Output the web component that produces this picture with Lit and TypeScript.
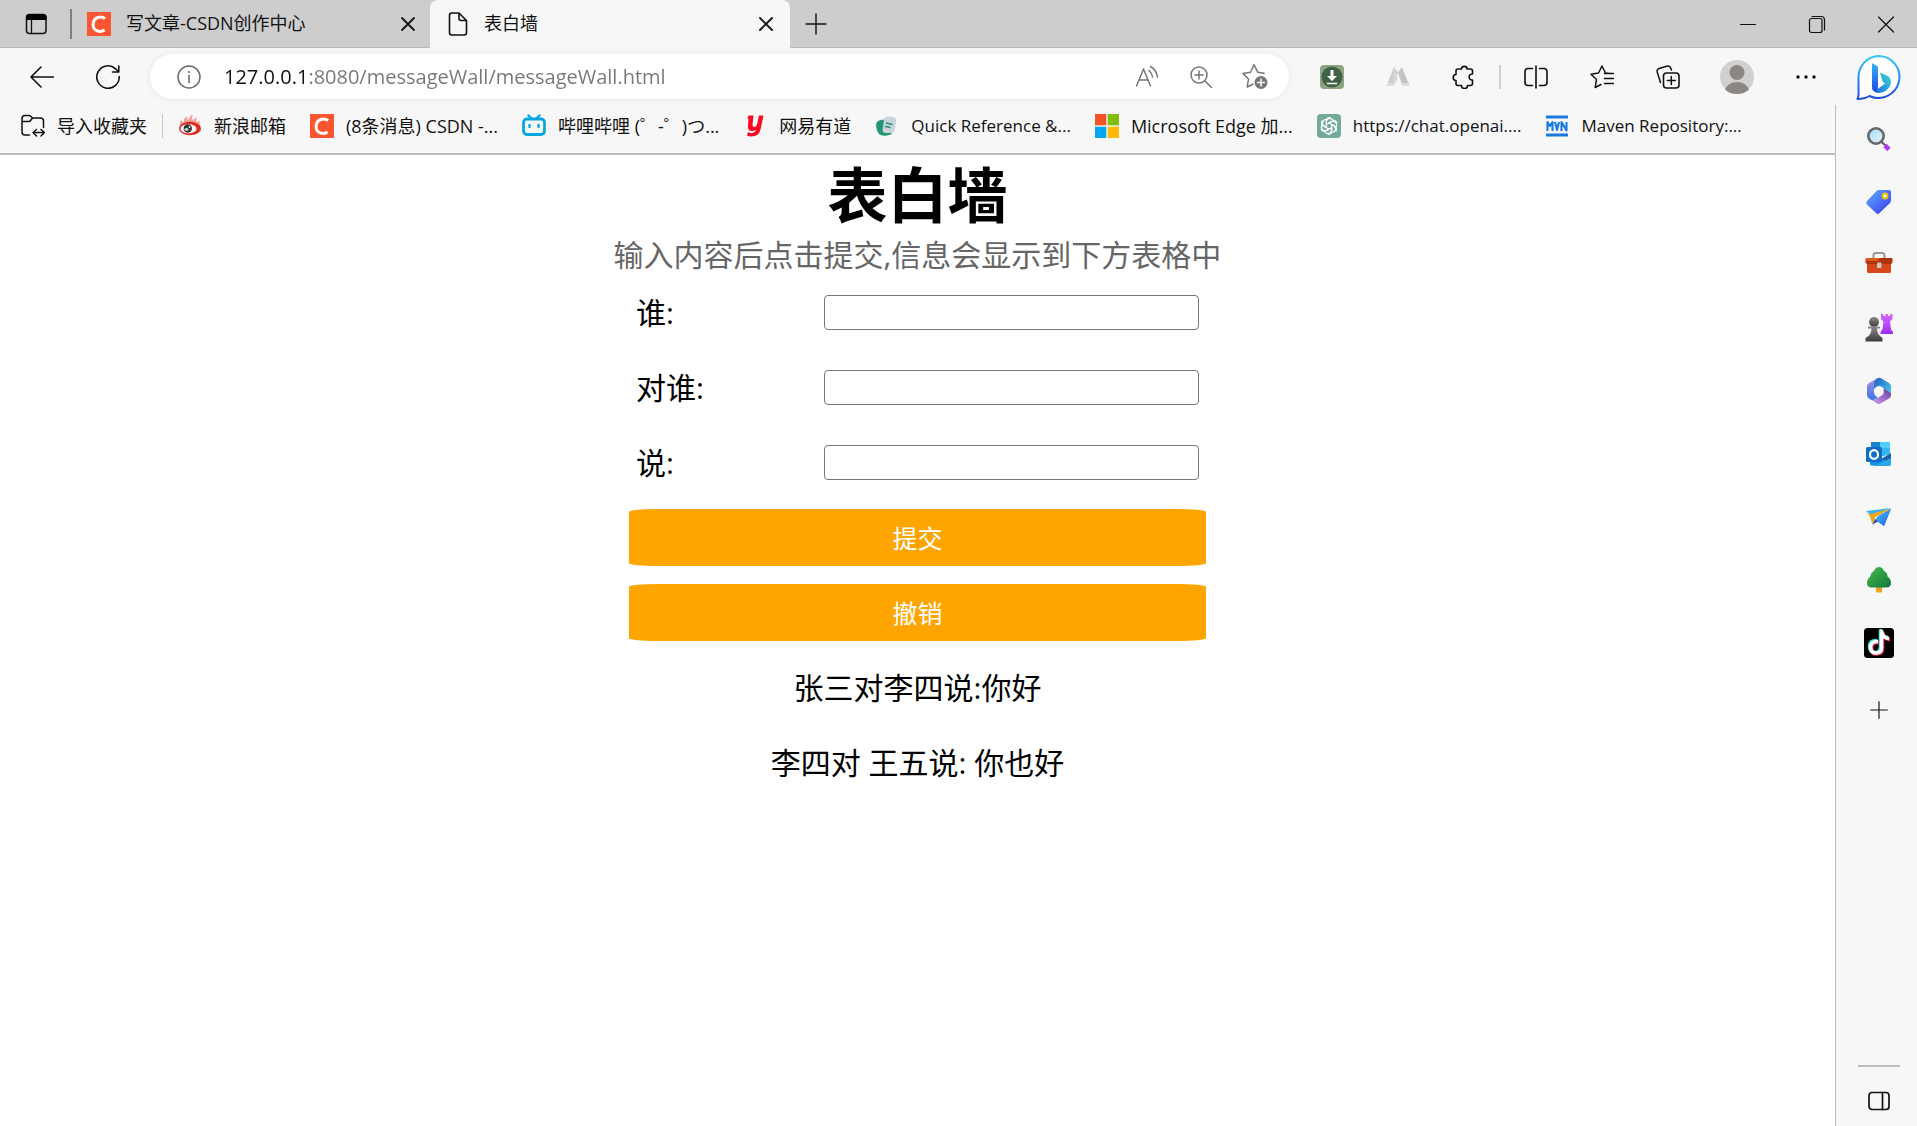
import { LitElement, html, svg, css } from "lit";
import { customElement, state } from "lit/decorators.js";

const icon = (size: number, body: unknown, box = 24) =>
  html`<svg width=${size} height=${size} viewBox="0 0 ${box} ${box}" fill="none" stroke-linecap="round" stroke-linejoin="round" aria-hidden="true">${body}</svg>`;

const csdn = svg`<rect width="24" height="24" fill="#fc5531"/><path d="M18 6.6C14.5 3.6 6.300 4.600 6.100 12.600C6 19.500 13.500 20.800 17.600 18.100" stroke="#fff" stroke-width="3" stroke-linecap="butt"/>`;

const icons = {
  tabs: svg`<rect x="2.500" y="2.500" width="19.500" height="19" rx="3" stroke="#111" stroke-width="1.500"/><path d="M2 8V5.500Q2 2 5.500 2H19Q22.500 2 22.500 5.500V8Z" fill="#000"/><path d="M7.500 8V21" stroke="#111" stroke-width="1.300"/>`,
  csdn,
  close: svg`<path d="M6 6L18 18M18 6L6 18" stroke="#111" stroke-width="1.800"/>`,
  doc: svg`<path d="M6 1H13L20.500 8.500V20.500Q20.500 23 18 23H6Q3.500 23 3.500 20.500V3.500Q3.500 1 6 1ZM13 1V6.500Q13 8.500 15 8.500H20.500" stroke="#111" stroke-width="1.600"/>`,
  plus: svg`<path d="M12 2V22M2 12H22" stroke="#111" stroke-width="1.400"/>`,
  minimise: svg`<path d="M4.500 12.500H19.500" stroke="#111" stroke-width="1.200"/>`,
  restore: svg`<rect x="4.500" y="6.500" width="12.500" height="14" rx="2" stroke="#111" stroke-width="1.200"/><path d="M7 4.500H16Q19.500 4.500 19.500 8V18" stroke="#111" stroke-width="1.200"/>`,
  exit: svg`<path d="M4.500 5L19.500 20M19.500 5L4.500 20" stroke="#111" stroke-width="1.200"/>`,
  back: svg`<path d="M23.500 12H1M11 2L1 12L11 22" stroke="#111" stroke-width="1.600"/>`,
  refresh: svg`<path d="M23.200 11.500A11.200 11.200 0 1 1 19.600 3.800L22.500 6.800M22.800 1V7H16.500" stroke="#111" stroke-width="1.600"/>`,
  info: svg`<circle cx="12" cy="12" r="11" stroke="#6b6b6b" stroke-width="1.500"/><path d="M12 10.500V17.500" stroke="#6b6b6b" stroke-width="1.600"/><circle cx="12" cy="7" r="1.100" fill="#6b6b6b"/>`,
  aloud: svg`<path d="M1.500 21L8.500 4L15.500 21M4 15H13M14 5.500Q17 8 17.500 12M15.500 1.500Q21.500 5 22.500 12" stroke="#767676" stroke-width="1.500"/>`,
  zoom: svg`<circle cx="10" cy="10" r="8" stroke="#767676" stroke-width="1.500"/><path d="M10 6V14M6 10H14M16 16L22.500 22.500" stroke="#767676" stroke-width="1.500"/>`,
  starAdd: svg`<path d="M22 9.300L15.800 8.200L12 .8L8.500 8.200L1 9.400L6.500 15L5.200 23L11 20.200" stroke="#767676" stroke-width="1.500"/><circle cx="19" cy="18.500" r="6.500" fill="#767676"/><path d="M19 15V22M15.500 18.500H22.500" stroke="#fff" stroke-width="1.500"/>`,
  download: svg`<rect width="24" height="24" rx="4" fill="#8fa37e"/><circle cx="12" cy="12" r="10.500" fill="#3e6148"/><path d="M10.500 5H13.500V11H17L12 16L7 11H10.500Z" fill="#fff"/><path d="M7.500 18.500H16.500" stroke="#fff" stroke-width="1.600"/>`,
  peaks: svg`<path d="M.5 21L8 2L12 7.500L7.500 21Z" fill="#ccc"/><path d="M23.500 21L16 2L12 7.500L16.500 21Z" fill="#c4c4c4"/><path d="M8 2L12 13L7.500 21Z" fill="#d8d8d8"/><path d="M.5 21H7.500L9 18H2Z M15 18H22L23.500 21H16.500Z" fill="#dedede"/>`,
  puzzle: svg`<path d="M6 4H9.500C9.500 .5 15 .5 15 4H18.500Q20.500 4 20.500 6V9C16 8.500 16 15.500 20.500 15V18.500Q20.500 20.500 18.500 20.500H15.500C15.500 24.500 9.500 24.500 9.500 20.500H6Q4 20.500 4 18.500V15.500C.3 15.500 .3 9.500 4 9.500V6Q4 4 6 4Z" stroke="#111" stroke-width="1.600"/>`,
  split: svg`<path d="M8.500 3.500H4Q1 3.500 1 6.500V17.500Q1 20.500 4 20.500H8.500M15.500 3.500H20Q23 3.500 23 6.500V17.500Q23 20.500 20 20.500H15.500M12 1V23" stroke="#111" stroke-width="1.600"/>`,
  favourites: svg`<path d="M20 8.500L15.500 8L12 1L8.500 8L1 9.200L6.500 14.500L5.200 22.500L11 19.500M14.500 8.500H23.500M14.500 13.500H23.500M14.500 18.500H23.500" stroke="#111" stroke-width="1.500"/>`,
  collections: svg`<path d="M4.500 17.500L1.200 7Q.5 4.500 3 3.500L11.500 1Q14 .5 14.800 3L15.500 5" stroke="#111" stroke-width="1.500"/><rect x="7.500" y="8" width="15.500" height="15" rx="3" stroke="#111" stroke-width="1.600"/><path d="M15.300 11.500V19.500M11.300 15.500H19.300" stroke="#111" stroke-width="1.500"/>`,
  avatar: svg`<circle cx="17" cy="17" r="17" fill="#d2d0ce"/><circle cx="17" cy="12.500" r="7.500" fill="#8a8683"/><path d="M5 29.500Q8 22 17 22Q26 22 29 29.500Q24 34 17 34Q10 34 5 29.500Z" fill="#8a8683"/>`,
  more: svg`<circle cx="4" cy="12" r="1.700" fill="#111"/><circle cx="12" cy="12" r="1.700" fill="#111"/><circle cx="20" cy="12" r="1.700" fill="#111"/>`,
  bing: svg`<defs><linearGradient id="bo" x1="0" y1="0" x2="0" y2="1"><stop offset="0" stop-color="#35c8f0"/><stop offset=".5" stop-color="#2a8cf0"/><stop offset="1" stop-color="#1b4fd8"/></linearGradient><linearGradient id="bb" x1="0" y1="0" x2="0" y2="1"><stop offset="0" stop-color="#36b3f5"/><stop offset="1" stop-color="#1b4be0"/></linearGradient><linearGradient id="bc" x1="1" y1="0" x2="0" y2="1"><stop offset="0" stop-color="#3be0d0"/><stop offset="1" stop-color="#1f62e8"/></linearGradient></defs>
    <path d="M24 2A21 21 0 1 1 14.500 42Q9 45.500 2.500 45Q4 42 3.500 36V23A21 21 0 0 1 24 2Z" fill="#fff" stroke="url(#bo)" stroke-width="2"/>
    <path d="M25 18.500L33 22Q37 25 35.500 31Q32 38.500 24 39Q18.500 39 17 34L22.500 35L30 29.500L27.500 27.500Z" fill="url(#bc)"/><path d="M17 10Q17 9 18 9.500L22 12Q23 12.500 23 14V32Q23 38 20 37.500Q17 36.500 17 33Z" fill="url(#bb)"/>`,
  folder: svg`<path d="M22.500 13.500V7Q22.500 4 19.500 4H11.500L9.500 2Q9 1.500 8 1.500H4Q1 1.500 1 4.500V18Q1 21 4 21H8.500M1 7.500H7.500Q9 7.500 10 6L11.500 4M12.500 18.500H23M15.500 15.500L12 18.500L15.500 22M20 15.500L23.500 18.500L20 22" stroke="#111" stroke-width="1.500"/>`,
  sina: svg`<path d="M2 12Q1 8 3.500 6Q4 8 6 8.500Q5 4 9 2.500Q9 5.500 10.500 6.500Q11 2 14.500 .8Q13.500 4.500 15 6.500Q16.500 4 19 3.500Q17.500 7 19 8.500Q20 7 21.500 6.500Q21 9 22.500 12Z" fill="#f5a399"/><ellipse cx="12" cy="14.500" rx="11" ry="6.800" fill="#e02a25"/><ellipse cx="10.500" cy="14.800" rx="8" ry="4.600" fill="#fff"/><circle cx="9.800" cy="14.500" r="4.200" fill="#3a3535"/><ellipse cx="8.500" cy="15.500" rx="2" ry="1.400" fill="#ccc"/><circle cx="11.500" cy="13" r=".9" fill="#fff"/>`,
  bili: svg`<path d="M6.500 1.500L9.500 4.500M17.500 1.500L14.500 4.500" stroke="#06a7e1" stroke-width="2.400"/><rect x="1.500" y="5" width="21" height="15.500" rx="3.500" stroke="#06a7e1" stroke-width="2.800"/><path d="M7.500 11V13M16.500 11V13" stroke="#06a7e1" stroke-width="2.400"/>`,
  youdao: svg`<path d="M5.500 1.500H10.500L9.500 10.500Q9.500 13 11.500 13Q13.500 13 14.500 8.500L16 1.500H20.500L17.500 15.500Q16 22.500 8 22.500Q5.500 22.500 4 21.500L5 18Q7 19.500 9.500 19Q12.500 18.500 12.800 15.500Q11.500 17 9 17Q4.500 17 5 11.500L5.500 5L4.500 4.500Z" fill="#fb0a22"/>`,
  quick: svg`<path d="M1.500 8.500Q4 5.500 9.500 5.500L17 20L12 21.500Q7 22.500 4 20Q0 14 1.500 8.500Z" fill="#1f9670"/><path d="M9 5.500Q9.500 3 12.500 2.500L18.500 3Q21 3.500 21 6.500L20 15Q19.500 18.500 16 19L10.500 19Q7.500 19 7.500 15.500Z" fill="#cbd3dd"/><path d="M11.500 9L17 10.500M10.500 12.500L15 13.500" stroke="#1f9670" stroke-width="1.400"/>`,
  microsoft: svg`<path d="M0 0H11.300V11.300H0Z" fill="#f35325"/><path d="M12.700 0H24V11.300H12.700Z" fill="#81bc06"/><path d="M0 12.700H11.300V24H0Z" fill="#05a6f0"/><path d="M12.700 12.700H24V24H12.700Z" fill="#ffba08"/>`,
  openai: svg`<rect width="24" height="24" rx="4" fill="#74aa9c"/><g stroke="#fff" stroke-width="1.200">${[0, 60, 120, 180, 240, 300].map(
    (a) => svg`<path transform="rotate(${a} 12 12)" d="M9.300 10.400L13.800 7.800Q17 6.300 19 9Q20.300 11.200 18.900 13.300M9.300 10.400V7.200Q9.500 3.500 13 3.500"/>`
  )}</g>`,
  maven: svg`<path d="M1 1.500H23V4.500H1ZM1 19.500H23V22.500H1Z" fill="#1878e0"/><path d="M2.500 17V8L5 12L7.500 8V17M10 8L12 16L14 8M16.500 17V8L21.500 16.500V8" stroke="#1878e0" stroke-width="2.100" stroke-linecap="butt"/>`,
  search: svg`<defs><linearGradient id="sg" x1="0" y1="0" x2="1" y2="1"><stop stop-color="#a9d8f8"/><stop offset="1" stop-color="#e0f4ff"/></linearGradient></defs><path d="M15.500 16L19 19" stroke="#5a5a5a" stroke-width="2"/><circle cx="10" cy="10" r="7.700" fill="url(#sg)" stroke="#666" stroke-width="2.600"/><path d="M19 19.500L23 23.500" stroke="#b43cf5" stroke-width="4.600" stroke-linecap="butt"/>`,
  tag: svg`<defs><linearGradient id="tg" x1="0" y1="0" x2="1" y2="1"><stop stop-color="#60b0ff"/><stop offset="1" stop-color="#3a35f0"/></linearGradient></defs><path d="M14 2H24Q26 2 26 4V12Q26 14 25 15L14 25.500Q12.500 26.500 11 25L2 16.500Q.5 15 2 13L11.500 3Q12.500 2 14 2Z" fill="url(#tg)"/><circle cx="20" cy="8" r="2.400" fill="#fff" stroke="#f0c000" stroke-width="2"/>`,
  toolbox: svg`<path d="M8.500 7V4.500Q8.500 2 11 2H17Q19.500 2 19.500 4.500V7" stroke="#999" stroke-width="2"/><rect x="2" y="7" width="24" height="15" rx="1.500" fill="#d6471a"/><path d="M.5 8Q.5 7 1.500 7H26.500Q27.500 7 27.500 8V10.500Q27.500 13 25 13H3Q.5 13 .5 10.500Z" fill="#b0330c"/><path d="M1 7H15L12 10H1Z" fill="#e55a1b"/><rect x="12" y="11.500" width="4.500" height="5.500" rx="1" fill="#c9c9c9"/>`,
  games: svg`<defs><linearGradient id="pg" x1="0" y1="0" x2="0" y2="1"><stop stop-color="#8b8b8b"/><stop offset="1" stop-color="#3c3c3c"/></linearGradient><linearGradient id="rg" x1="0" y1="0" x2="0" y2="1"><stop stop-color="#d56bff"/><stop offset="1" stop-color="#9c2cf5"/></linearGradient></defs><path d="M16 0H18.500V2H20.500V0H23V2H25V0H27.500V5L25 7.500L26 15.500L28 18V20H15.500V18L17.500 15L18.500 7.500L16 5Z" fill="url(#rg)"/><circle cx="9" cy="8" r="5" fill="url(#pg)"/><path d="M3 12.500H15V14.500H12Q12 19 15 22L17.500 24V27.500H.5V24L3.500 22Q6.500 19 6.500 14.500H3Z" fill="url(#pg)"/>`,
  m365: svg`<defs><linearGradient id="ma" x1="0" y1="1" x2="0" y2="0"><stop stop-color="#3478e8"/><stop offset="1" stop-color="#b48ce8"/></linearGradient><linearGradient id="mb" x1="0" y1="0" x2="1" y2="1"><stop stop-color="#1e5ec0"/><stop offset="1" stop-color="#48c8f0"/></linearGradient><linearGradient id="mc" x1="1" y1="0" x2="0" y2="1"><stop stop-color="#5c3c9c"/><stop offset="1" stop-color="#d49cf0"/></linearGradient></defs><path d="M13 1L4 6Q2 7 2 9.500V18Q2 20.500 4 21.500L7.500 23.500L13 20.500Q8.500 18 9 14V6Q9 3 13 1Z" fill="url(#ma)"/><path d="M13 1Q9 3 9 6V12Q13 7 17 10L26 16V9.500Q26 7.500 24 6L15.500 1Q14 .5 13 1Z" fill="url(#mb)"/><path d="M26 16V18Q26 20.500 24 21.500L15.500 26.500Q14 27.500 12 26.500L7.500 23.500Q14 21 18.500 17V11Z" fill="url(#mc)"/><circle cx="14" cy="14" r="4.500" fill="#f7f7f7"/>`,
  outlook: svg`<path d="M6 2H25V14L16 17L6 12Z" fill="#35b8f1"/><path d="M6 2H15V8H6Z" fill="#1683d0"/><path d="M15 2H25V8H15Z" fill="#50d0f8"/><path d="M5 12L25 24Q25 25.500 23 25.500H7Q5 25.500 5 24Z" fill="#1490df"/><path d="M26 13V24L16 19Z" fill="#1262ac"/><path d="M9 25.500L26 18V24Q26 26 24 26H9Z" fill="#28a8ea"/><rect x="1" y="7" width="16" height="15" rx="1.500" fill="#0f6fc6"/><ellipse cx="9" cy="14.500" rx="4" ry="4.300" stroke="#fff" stroke-width="2.200"/>`,
  drop: svg`<defs><linearGradient id="dg" x1="0" y1="0" x2="1" y2="1"><stop stop-color="#3cc8f5"/><stop offset="1" stop-color="#2a5fe8"/></linearGradient></defs><path d="M1 8L26 5L7 13Z" fill="#38b4f0"/><path d="M26 5.500L19 23L13 18Z" fill="#2f66ea"/><path d="M26 5.500L13 13L10 17L19 23Z" fill="url(#dg)"/><path d="M3 10.500L5 13.500L7.500 21.500L10.500 14L26 5.500L6 11Z" fill="#f5a414"/><path d="M7.500 21.500L10 16L13 18.500Z" fill="#2350bf"/>`,
  tree: svg`<defs><linearGradient id="trg" x1="0" y1="0" x2="1" y2="1"><stop stop-color="#4cb848"/><stop offset="1" stop-color="#0c7a3e"/></linearGradient></defs><path d="M11 20H17V25Q17 26.500 15.500 26.500H12.500Q11 26.500 11 25Z" fill="#f0a020"/><path d="M14 1Q17.500 1 19 5Q22.500 6.500 22.500 10.500Q26 13 26 17Q26 21 22 21.500H6Q2 21 2 17Q2 13 5.500 10.500Q5.500 6.500 9 5Q10.500 1 14 1Z" fill="url(#trg)"/>`,
  tiktok: svg`<rect width="30" height="30" rx="3.500" fill="#000"/><g stroke-width="3.600" stroke-linecap="butt"><path d="M13 12.500Q5.500 12 5.500 18.500Q6 24.500 11 24.500Q16.500 24.500 16.500 19V2.500Q17.500 9 24 9.500" stroke="#25e6e0"/><path d="M15 14.500Q7.500 14 7.500 20Q8 26 12.500 26Q18.500 26 18.500 20.500V4.500Q19.500 11 26 11.500" stroke="#fb2c55"/><path d="M14 13.500Q6.500 13 6.500 19.500Q7 25 12 25Q17.500 25 17.500 20V3Q18.500 10 25 10.500" stroke="#fff"/></g>`,
  panel: svg`<rect x="2" y="3.500" width="20" height="17" rx="3" stroke="#111" stroke-width="1.700"/><path d="M15.500 3.500V20.500" stroke="#111" stroke-width="1.700"/>`,
};

const bookmarks = [
  { text: "新浪邮箱", icon: icons.sina },
  { text: "(8条消息) CSDN -...", icon: icons.csdn },
  { text: "哔哩哔哩 (゜-゜)つ...", icon: icons.bili },
  { text: "网易有道", icon: icons.youdao },
  { text: "Quick Reference &...", icon: icons.quick, latin: true },
  { text: "Microsoft Edge 加...", icon: icons.microsoft },
  { text: "https://chat.openai....", icon: icons.openai, latin: true },
  { text: "Maven Repository:...", icon: icons.maven, latin: true },
];

const base = css`
  :host, * { box-sizing: border-box; }
  svg { display: block; flex: none; }
  button, a { font: inherit; color: inherit; text-decoration: none; }
  button { border: 0; padding: 0; background: none; }
`;

@customElement("title-bar")
export class TitleBar extends LitElement {
  static styles = [base, css`
    :host { display: flex; height: 48px; background: #cdcdcd; box-shadow: inset 0 -1px #b8b8b8; font-size: 18px; }
    .menu { width: 70px; display: grid; place-items: center; padding-left: 2px; }
    .rule { width: 2px; height: 30px; margin-top: 9px; background: #808080; }
    .tab { display: flex; align-items: center; gap: 15px; width: 358px; padding: 0 10px 0 15px; }
    .active { width: 360px; gap: 14px; padding: 0 12px 0 16px; background: #f7f7f7; border-radius: 8px 8px 0 0; }
    .label { flex: 1; white-space: nowrap; line-height: 24px; padding-bottom: 2px; }
    .new { width: 51px; display: grid; place-items: center; }
    .window { margin-left: auto; display: flex; gap: 6px; }
    .window button { width: 63px; display: grid; place-items: center; }
  `];
  render() {
    return html`
      <button class="menu" aria-label="标签页操作">${icon(24, icons.tabs)}</button>
      <span class="rule"></span>
      <div class="tab">${icon(24, icons.csdn)}<span class="label">写文章-CSDN创作中心</span><button aria-label="关闭标签页">${icon(24, icons.close)}</button></div>
      <div class="tab active">${icon(24, icons.doc)}<span class="label">表白墙</span><button aria-label="关闭标签页">${icon(24, icons.close)}</button></div>
      <button class="new" aria-label="新建标签页">${icon(24, icons.plus)}</button>
      <div class="window">
        <button aria-label="最小化">${icon(24, icons.minimise)}</button>
        <button aria-label="还原">${icon(24, icons.restore)}</button>
        <button aria-label="关闭">${icon(24, icons.exit)}</button>
      </div>`;
  }
}

@customElement("tool-bar")
export class ToolBar extends LitElement {
  static styles = [base, css`
    :host { display: flex; align-items: center; height: 57px; padding-left: 9px; background: #f7f7f7; }
    .slot { width: 66px; height: 45px; flex: none; display: grid; place-items: center; }
    .profile { width: 72px; }
    .bing { width: 78px; }
    .address { flex: 1; display: flex; align-items: center; height: 45px; margin: 0 10px 0 9px; padding: 0 7px 0 27px; border-radius: 23px; background: #fff; box-shadow: 0 0 6px #e6e6e6; }
    .url { flex: 1; min-width: 0; margin-left: 23px; padding: 0; border: 0; outline: 0; font: inherit; font-size: 20px; line-height: 28px; color: transparent; background: linear-gradient(90deg, #111 82px, #767676 82px); -webkit-background-clip: text; background-clip: text; }
    .address .slot { width: 54px; }
    .rule { width: 2px; height: 24px; margin: 0 2px; background: #d0d0d0; flex: none; }
  `];
  render() {
    const slot = (name: string, size: number, body: unknown, cls = "", box = 24) =>
      html`<button class="slot ${cls}" aria-label=${name}>${icon(size, body, box)}</button>`;
    return html`
      ${slot("返回", 24, icons.back)}${slot("刷新", 24, icons.refresh)}
      <div class="address">
        ${icon(24, icons.info)}
        <input class="url" aria-label="地址栏" .value=${"127.0.0.1:8080/messageWall/messageWall.html"}>
        ${slot("大声朗读", 24, icons.aloud)}${slot("缩放", 24, icons.zoom)}${slot("添加到收藏夹", 26, icons.starAdd, "", 26)}
      </div>
      ${slot("下载扩展", 24, icons.download)}${slot("扩展", 24, icons.peaks)}${slot("扩展管理", 24, icons.puzzle)}
      <span class="rule"></span>
      ${slot("分屏", 24, icons.split)}${slot("收藏夹", 24, icons.favourites)}${slot("集锦", 24, icons.collections)}
      ${slot("个人资料", 34, icons.avatar, "profile", 34)}${slot("更多", 24, icons.more)}${slot("必应", 47, icons.bing, "bing", 47)}`;
  }
}

@customElement("bookmark-bar")
export class BookmarkBar extends LitElement {
  static styles = [base, css`
    :host { display: flex; align-items: center; gap: 24px; height: 50px; padding: 0 21px 6px; background: #f7f7f7; border-bottom: 2px solid #bdbdbd; font-size: 18px; line-height: 24px; overflow: hidden; }
    .item { display: flex; align-items: center; gap: 12px; white-space: nowrap; flex: none; }
    .latin { font-size: 17px; }
    .first { padding-right: 15px; border-right: 1px solid #c8c8c8; margin-right: -9px; }
  `];
  render() {
    return html`
      <a class="item first" href="#">${icon(24, icons.folder)}<span>导入收藏夹</span></a>
      ${bookmarks.map((b) => html`<a class="item ${b.latin ? "latin" : ""}" href="#">${icon(24, b.icon)}<span>${b.text}</span></a>`)}`;
  }
}

@customElement("message-wall")
export class MessageWall extends LitElement {
  static styles = [base, css`
    :host { display: flex; flex-direction: column; align-items: center; flex: 1; background: #fff; color: #000; font-size: 30px; line-height: 40px; }
    h1 { margin: 0; font-size: 60px; line-height: 80px; }
    p { margin: 0; color: #666; }
    .row { display: flex; justify-content: center; align-items: center; height: 75px; }
    label { width: 188px; }
    input { width: 375px; height: 35px; padding: 2px 3px; border: 1px solid #767676; border-radius: 4px; font: inherit; font-size: 20px; background: #fff; }
    .action { width: 577px; height: 57px; border-radius: 5%; background: orange; color: #fff; font-size: 25px; }
  `];
  @state() private messages = ["张三对李四说:你好", "李四对 王五说: 你也好"];

  private field(id: string) {
    return this.renderRoot.querySelector<HTMLInputElement>("#" + id)!;
  }
  private submit() {
    const fields = ["from", "to", "text"].map((id) => this.field(id));
    const [from, to, text] = fields.map((f) => f.value);
    if (!from || !to || !text) return;
    this.messages = [...this.messages, `${from}对${to}说:${text}`];
    fields.forEach((f) => (f.value = ""));
  }
  private undo() {
    this.messages = this.messages.slice(0, -1);
  }
  render() {
    const fields = [["from", "谁:"], ["to", "对谁:"], ["text", "说:"]];
    return html`
      <h1>表白墙</h1>
      <p>输入内容后点击提交,信息会显示到下方表格中</p>
      ${fields.map(([id, label]) => html`<div class="row"><label for=${id}>${label}</label><input id=${id} type="text"></div>`)}
      <div class="row"><button class="action" @click=${this.submit}>提交</button></div>
      <div class="row"><button class="action" @click=${this.undo}>撤销</button></div>
      ${this.messages.map((m) => html`<div class="row">${m}</div>`)}`;
  }
}

@customElement("side-bar")
export class SideBar extends LitElement {
  static styles = [base, css`
    :host { display: flex; flex-direction: column; align-items: center; width: 82px; flex: none; padding: 2px 0 7px 4px; background: #f7f7f7; border-left: 1px solid #bdbdbd; }
    button { width: 48px; height: 63px; display: grid; place-items: center; }
    .add { height: 72px; }
    .rule { width: 42px; height: 2px; margin-top: auto; background: #bdbdbd; }
    .panel { height: 52px; padding-top: 16px; }
  `];
  render() {
    const apps: [string, unknown, number][] = [
      ["搜索", icons.search, 26], ["购物", icons.tag, 28], ["工具", icons.toolbox, 28], ["游戏", icons.games, 28],
      ["Microsoft 365", icons.m365, 28], ["Outlook", icons.outlook, 28], ["Drop", icons.drop, 28], ["Tree", icons.tree, 28], ["TikTok", icons.tiktok, 30],
    ];
    return html`
      ${apps.map(([name, body, box]) => html`<button aria-label=${name}>${icon(box, body, box)}</button>`)}
      <button class="add" aria-label="添加">${icon(20, icons.plus)}</button>
      <span class="rule"></span>
      <button class="panel" aria-label="隐藏边栏">${icon(24, icons.panel)}</button>`;
  }
}

@customElement("app-root")
export class AppRoot extends LitElement {
  static styles = css`
    :host { display: flex; flex-direction: column; min-height: 100vh; font-family: "Open Sans", "Noto Sans CJK SC", sans-serif; color: #111; background: #fff; }
    .body { flex: 1; display: flex; }
    .content { flex: 1; min-width: 0; display: flex; flex-direction: column; }
  `;
  render() {
    return html`
      <title-bar></title-bar>
      <tool-bar></tool-bar>
      <div class="body">
        <div class="content">
          <bookmark-bar></bookmark-bar>
          <message-wall></message-wall>
        </div>
        <side-bar></side-bar>
      </div>`;
  }
}
